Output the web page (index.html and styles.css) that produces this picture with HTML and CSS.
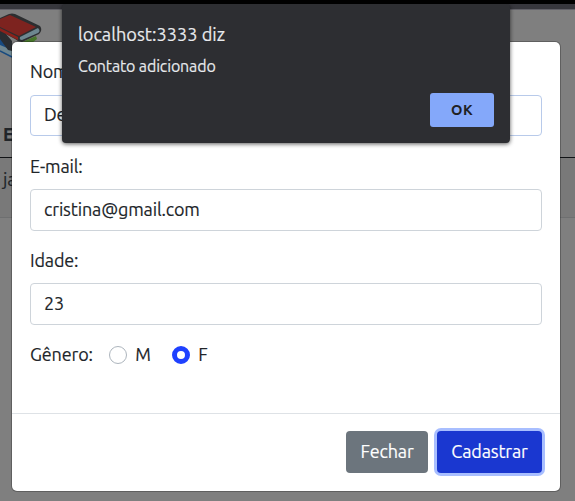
FILE: index.html
```html
<!DOCTYPE html>
<html lang="pt-BR">
<head>
<meta charset="utf-8">
<title>Contatos</title>
<link rel="stylesheet" href="styles.css">
</head>
<body>
<div class="page">
  <div class="tabstrip"></div>
  <div class="toolbar"></div>
  <header class="brand">
    <svg class="books" width="44" height="52" viewBox="0 10 44 52">
      <path d="M0 41 L12 50 L12 56 L0 50Z" fill="#6f8791"/>
      <path d="M22 42 L36 36 L37 39 L28 46Z" fill="#47762b"/>
      <path d="M0 35 L12 43 L12 50 L0 45Z" fill="#174a80"/>
      <path d="M0 51 L12 57" stroke="#174b80" stroke-width="1.5"/>
      <path d="M0 27 L12 41 L12 51 L8 50 L0 39Z" fill="#292d31"/>
      <path d="M0 18 L9 14 Q12 13 15 14 L40 26 Q43 30 39 34 L22 42 Q18 42 15 39 L0 31Z" fill="#2c2e30"/>
      <path d="M0 19 L10 15 L36 27 L19 36 L0 27Z" fill="#7d231f"/>
      <path d="M20 37 L38 28 Q41 31 38 33 L22 40 Q19 40 20 37Z" fill="#6d8790"/>
      <path d="M0 28 L18 37 L18 40 L0 31Z" fill="#8a211b"/>
    </svg>
  </header>
  <div class="table">
    <div class="thead">E</div>
    <div class="row">ja</div>
  </div>
</div>
<form class="modal">
  <div class="modal-body">
    <div class="field"><label>Nome:</label><div class="input focus">De</div></div>
    <div class="field"><label>E-mail:</label><div class="input">cristina@gmail.com</div></div>
    <div class="field"><label>Idade:</label><div class="input">23</div></div>
    <div class="gender">
      <span>Gênero:</span>
      <i class="radio"></i><span>M</span>
      <i class="radio checked"></i><span>F</span>
    </div>
  </div>
  <div class="modal-footer">
    <button type="button" class="btn close">Fechar</button>
    <button type="button" class="btn submit">Cadastrar</button>
  </div>
</form>
<div class="alert">
  <div class="alert-title">localhost:3333 diz</div>
  <div class="alert-text">Contato adicionado</div>
  <button type="button" class="ok">OK</button>
</div>
</body>
</html>
```
FILE: styles.css
```css
* { box-sizing: border-box; }
body {
  margin: 0;
  width: 575px;
  height: 501px;
  overflow: hidden;
  position: relative;
  background: #7f7f7f;
  font: 18px/27px Ubuntu, "Noto Sans", sans-serif;
  letter-spacing: -.15px;
  -webkit-text-stroke: .15px currentColor;
  color: #212529;
}
.tabstrip { height: 4px; background: #000; }
.toolbar { height: 6px; background: #37373d; border-bottom: 1px solid #626168; }
.brand { height: 101px; }
.books { display: block; }
.thead {
  height: 47px;
  padding: 10px 0 0 3px;
  font-weight: 700;
  border-bottom: 1px solid #111316;
}
.row {
  height: 60px;
  padding: 8px 3px;
  background: #797979;
  border-bottom: 1px solid #6e6f70;
}
.modal {
  position: absolute;
  left: 12px;
  top: 42px;
  width: 548px;
  height: 449px;
  background: #fff;
  border-radius: 5px;
  box-shadow: 0 0 0 1px rgba(0, 0, 0, .25);
}
.modal-body { height: 371px; padding: 16px 18px; }
.field { margin-bottom: 16px; }
.field label { display: block; height: 27px; margin-bottom: 9px; }
.field:first-child label { margin-bottom: 10px; }
.input {
  height: 42px;
  padding: 6px 13px;
  border: 1px solid #ced4da;
  border-radius: 4px;
}
.input.focus { height: 41px; margin-bottom: 17px; padding-top: 5px; border-color: #b8caea; }
.gender { display: flex; align-items: center; height: 27px; }
.radio {
  width: 18px;
  height: 18px;
  margin: 1px 8.5px 0 16px;
  border: 1px solid #adb5bd;
  border-radius: 50%;
}
.radio.checked { border: 5.5px solid #1f41ff; margin-left: 21px; }
.modal-footer {
  height: 78px;
  padding: 17px 18px 0 0;
  display: flex;
  justify-content: flex-end;
  gap: 9px;
  border-top: 1px solid #dee2e6;
}
.btn {
  height: 42px;
  padding: 0 0 2px;
  border: 0;
  border-radius: 4px;
  color: #fff;
  font: inherit;
  letter-spacing: inherit;
}
.close { width: 82px; background: #6c757d; }
.submit { width: 105px; background: #1a37d0; box-shadow: 0 0 0 3px #a8beff; }
.alert {
  position: absolute;
  left: 62px;
  top: 4px;
  width: 448px;
  height: 139px;
  padding: 17px 16px;
  border-radius: 4px;
  background: #2d2e32;
  color: #e8eaed;
  box-shadow: 0 1px 4px rgba(0, 0, 0, .65);
}
.alert-title { font-size: 18.2px; letter-spacing: 0; }
.alert-text { font-size: 16px; line-height: 24px; margin-top: 6px; }
.ok {
  display: block;
  width: 64px;
  height: 34px;
  margin: 15px 0 0 auto;
  padding: 0 0 1px;
  border: 0;
  border-radius: 3px;
  background: #84a8fa;
  color: #202124;
  font: 700 14.5px Ubuntu, "Noto Sans", sans-serif;
  letter-spacing: .5px;
  -webkit-text-stroke: 0;
}
```
